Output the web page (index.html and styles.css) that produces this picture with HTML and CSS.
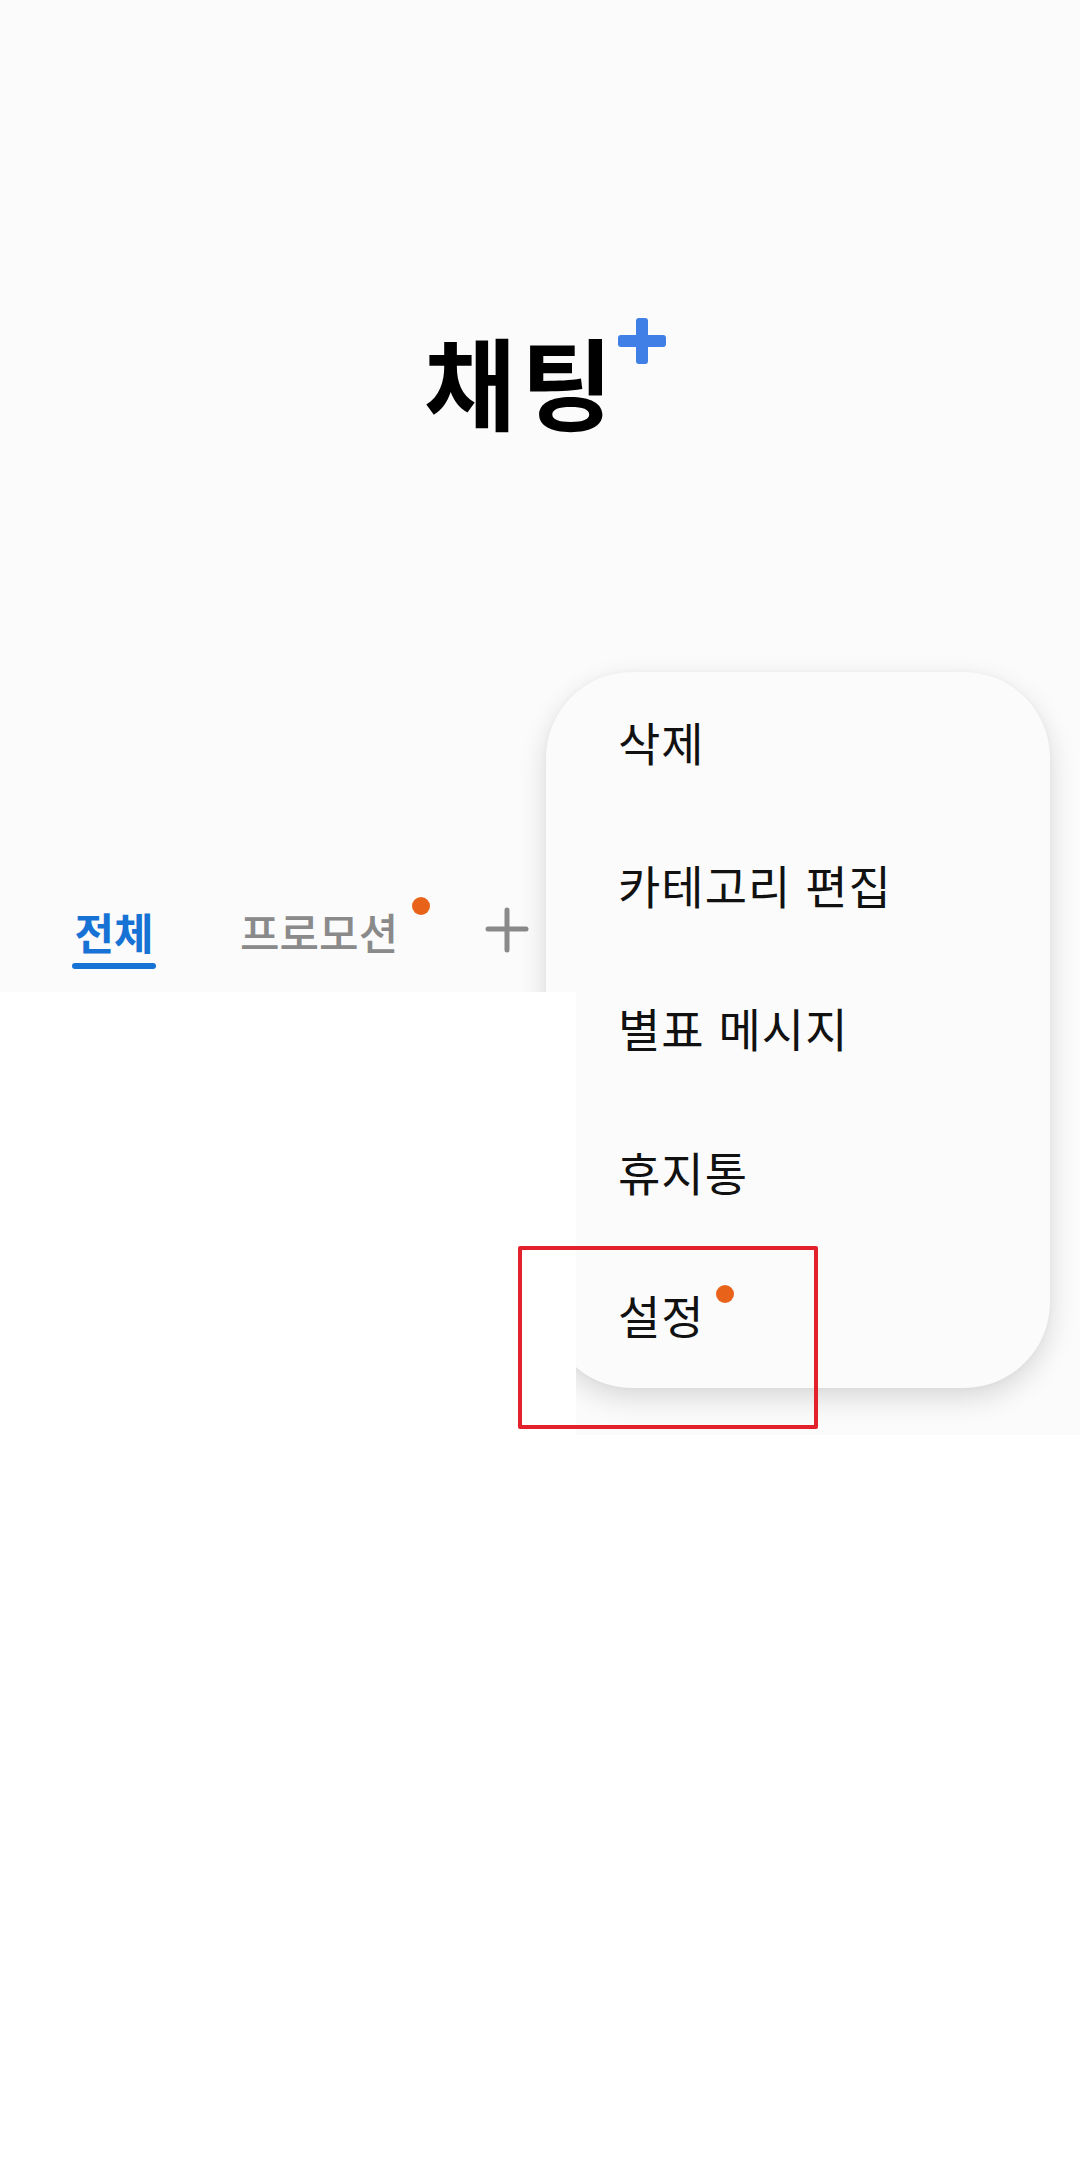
FILE: index.html
```html
<!DOCTYPE html>
<html lang="ko">
<head>
<meta charset="utf-8">
<title>채팅+</title>
<link rel="stylesheet" href="styles.css">
</head>
<body>
<div class="screen">
  <header class="top">
    <div class="logo">
      <span class="logo-text">채팅</span>
      <svg class="logo-plus" width="48" height="46" viewBox="0 0 48 46">
        <rect x="18" y="0" width="12" height="46" rx="3" fill="#3f7fe6"/>
        <rect x="0" y="17" width="48" height="12" rx="3" fill="#3f7fe6"/>
      </svg>
    </div>
    <nav class="tabbar">
      <div class="tab tab-active">
        <span class="tab-label">전체</span>
        <span class="tab-indicator"></span>
      </div>
      <div class="tab tab-promo">
        <span class="tab-label">프로모션</span>
        <span class="badge-dot promo-dot"></span>
      </div>
      <svg class="tab-add" width="44" height="46" viewBox="0 0 44 46">
        <line x1="22" y1="3" x2="22" y2="43" stroke="#8a8a8a" stroke-width="5" stroke-linecap="round"/>
        <line x1="3" y1="22" x2="41" y2="22" stroke="#8a8a8a" stroke-width="5" stroke-linecap="round"/>
      </svg>
    </nav>
  </header>

  <div class="menu-layer"></div>
  <ul class="menu">
    <li class="menu-item">삭제</li>
    <li class="menu-item">카테고리 편집</li>
    <li class="menu-item">별표 메시지</li>
    <li class="menu-item">휴지통</li>
    <li class="menu-item"><span class="item-label">설정<span class="badge-dot item-dot"></span></span></li>
  </ul>
  <div class="mask"></div>
  <div class="highlight"></div>
</div>
</body>
</html>
```

FILE: styles.css
```css
* { box-sizing: border-box; }
html, body {
  margin: 0;
  padding: 0;
  background: #ffffff;
}
body {
  font-family: "Noto Sans CJK KR", "Noto Sans", sans-serif;
  color: #111111;
}
.screen {
  position: relative;
  width: 1080px;
  height: 2168px;
  overflow: hidden;
  background: #ffffff;
}
.top {
  height: 992px;
  background: #fbfbfb;
  display: flex;
  flex-direction: column;
  padding-top: 330px;
}
.logo {
  display: flex;
  align-items: flex-start;
  justify-content: center;
  padding-left: 10px;
}
.logo-text {
  font-size: 100px;
  font-weight: 700;
  line-height: 1;
  color: #000;
  letter-spacing: 5px;
}
.logo-plus {
  margin-top: -12px;
  margin-left: 0;
}
.tabbar {
  margin-top: auto;
  display: flex;
  align-items: flex-start;
  padding-left: 72px;
  padding-bottom: 23px;
}
.tab {
  display: flex;
  flex-direction: column;
  align-items: center;
  position: relative;
}
.tab-label {
  font-size: 43px;
  line-height: 50px;
  white-space: nowrap;
}
.tab-active {
  width: 84px;
}
.tab-active .tab-label {
  color: #1672d4;
  font-weight: 700;
}
.tab-indicator {
  display: block;
  width: 84px;
  height: 6px;
  margin-top: 7px;
  border-radius: 3px;
  background: #1672d4;
}
.tab-promo {
  margin-left: 84px;
  width: 164px;
  align-items: flex-start;
}
.tab-promo .tab-label {
  color: #8a8a8a;
  font-weight: 500;
}
.badge-dot {
  position: absolute;
  width: 18px;
  height: 18px;
  border-radius: 50%;
  background: #e8621a;
}
.promo-dot {
  left: 172px;
  top: -9px;
}
.tab-add {
  margin-left: 81px;
  margin-top: 1px;
}
.menu-layer {
  position: absolute;
  left: 576px;
  top: 992px;
  width: 504px;
  height: 443px;
  background: #fbfbfb;
}
.menu {
  position: absolute;
  left: 546px;
  top: 672px;
  width: 504px;
  height: 716px;
  margin: 0;
  padding: 0;
  list-style: none;
  background: #fbfbfb;
  border-radius: 86px;
  box-shadow: 0 10px 28px rgba(0, 0, 0, 0.14), 0 0 6px rgba(0, 0, 0, 0.03);
}
.menu-item {
  height: 143.2px;
  display: flex;
  align-items: center;
  padding-left: 72px;
  padding-bottom: 4px;
  font-size: 46px;
  letter-spacing: 1px;
  line-height: 1.2;
  color: #111;
  white-space: nowrap;
}
.item-label {
  position: relative;
}
.item-dot {
  right: -29px;
  top: -2px;
}
.mask {
  position: absolute;
  left: 0;
  top: 992px;
  width: 576px;
  height: 1176px;
  background: #ffffff;
}
.highlight {
  position: absolute;
  left: 518px;
  top: 1246px;
  width: 300px;
  height: 183px;
  border: 4px solid #e3212b;
  border-radius: 2px;
}
```
